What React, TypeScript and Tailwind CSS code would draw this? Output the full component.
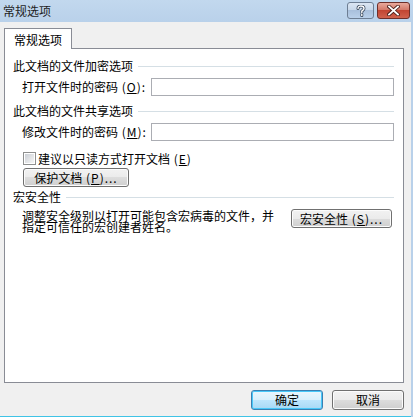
const font = { fontFamily: '"Noto Sans CJK SC", "Liberation Sans", sans-serif' };

function WinButton({ children, className = "", isDefault = false }: { children: React.ReactNode; className?: string; isDefault?: boolean }) {
	return (
		<div
			className={`flex items-center justify-center rounded-[3px] border text-[12px] leading-[12px] text-black ${
				isDefault
					? "border-[#3c7fb1] bg-[linear-gradient(#eaf6fd_0%,#d9f0fc_50%,#bee6fd_50%,#a7d9f5_100%)] shadow-[inset_0_0_0_1px_#48c8f9]"
					: "border-[#707070] bg-[linear-gradient(#f2f2f2_0%,#ebebeb_50%,#dddddd_50%,#cfcfcf_100%)] shadow-[inset_0_0_0_1px_#fcfcfc]"
			} ${className}`}
		>
			{children}
		</div>
	);
}

function GroupHeading({ text }: { text: string }) {
	return (
		<div className="flex h-[12px] items-center pr-[9px]">
			<span className="whitespace-nowrap text-[12px] leading-[12px]">{text}</span>
			<div className="ml-[5px] h-px flex-1 bg-[#d5dfe5]" />
		</div>
	);
}

function PasswordRow({ label, keyChar }: { label: string; keyChar: string }) {
	return (
		<div className="mt-[6px] flex h-[18px] items-center pl-[9px] pr-[9px]">
			<span className="w-[129px] whitespace-nowrap text-[12px] leading-[12px]">
				{label}
				<span className="tracking-[1px]">
					{" "}(<u>{keyChar}</u>):
				</span>
			</span>
			<div className="h-[18px] flex-1 border border-[#abadb3] bg-white" />
		</div>
	);
}

export default function App() {
	return (
		<div className="flex h-[417px] w-[413px] flex-col bg-[#b9d1ea] text-black" style={font}>
			<div className="flex h-[22px] shrink-0 items-start justify-between bg-[linear-gradient(#c2d8ee,#b9d1ea)] pl-[3px] pr-[3px]">
				<span className="mt-[5px] text-[12px] leading-[12px] text-[#1e1e1e]">常规选项</span>
				<div className="mt-[2px] flex gap-[3px]">
					<div className="flex h-[17px] w-[27px] items-center justify-center rounded-[3px] border border-[#6d7e93] bg-[linear-gradient(#dbe6f3_0%,#c8d8ea_45%,#a9c0dc_50%,#b9d0ea_100%)]">
						<svg width="10" height="12" viewBox="0 0 10 12">
							<path d="M2 3.5 C2 1.5 3.5 1 5 1 C6.8 1 8 2 8 3.5 C8 5 6.5 5.3 5.8 6.2 L5.8 7.6 M5.8 9.3 L5.8 10.6" fill="none" stroke="#3a4a5e" strokeWidth="3" strokeLinecap="round" />
							<path d="M2 3.5 C2 1.5 3.5 1 5 1 C6.8 1 8 2 8 3.5 C8 5 6.5 5.3 5.8 6.2 L5.8 7.6 M5.8 9.3 L5.8 10.6" fill="none" stroke="#ffffff" strokeWidth="1.4" strokeLinecap="round" />
						</svg>
					</div>
					<div className="flex h-[17px] w-[33px] items-center justify-center rounded-[3px] border border-[#6e2f2a] bg-[linear-gradient(#e9a99c_0%,#d47a6a_45%,#c24532_50%,#d0624d_100%)]">
						<svg width="13" height="11" viewBox="0 0 13 11">
							<path d="M2 1.5 L11 9.5 M11 1.5 L2 9.5" fill="none" stroke="#4a1d18" strokeWidth="3.6" strokeLinecap="square" />
							<path d="M2 1.5 L11 9.5 M11 1.5 L2 9.5" fill="none" stroke="#ffffff" strokeWidth="1.8" strokeLinecap="square" />
						</svg>
					</div>
				</div>
			</div>
			<div className="mr-[2px] flex flex-1 flex-col border-b border-[#3fc3e6] bg-[#f0f0f0] pl-[4px] pr-[7px] pt-[6px]">
				<div className="relative z-10 -mb-px flex h-[21px] w-[68px] items-center justify-center border border-b-0 border-[#898c95] bg-white pt-[1px] text-[12px] leading-[12px]">
					常规选项
				</div>
				<div className="flex h-[335px] flex-col border border-[#898c95] bg-white pl-[8px] pt-[11px]">
					<GroupHeading text="此文档的文件加密选项" />
					<PasswordRow label="打开文件时的密码" keyChar="O" />
					<div className="mt-[9px]">
						<GroupHeading text="此文档的文件共享选项" />
					</div>
					<PasswordRow label="修改文件时的密码" keyChar="M" />
					<div className="mt-[11px] flex h-[13px] items-center pl-[10px]">
						<div className="flex h-[13px] w-[13px] items-center justify-center border border-[#8e8f8f] bg-white">
							<div className="h-[9px] w-[9px] bg-[linear-gradient(135deg,#cbcfd5,#f6f6f6)]" />
						</div>
						<span className="ml-[2px] text-[12px] leading-[12px]">
							建议以只读方式打开文档<span className="tracking-[1px]"> (<u>E</u>)</span>
						</span>
					</div>
					<WinButton className="ml-[10px] mt-[3px] h-[19px] w-[106px]">
						保护文档<span className="tracking-[1px]">&nbsp;(<u>P</u>)...</span>
					</WinButton>
					<div className="mt-[4px]">
						<GroupHeading text="宏安全性" />
					</div>
					<div className="mt-[6px] flex items-start pl-[9px] pr-[11px]">
						<p className="w-[256px] pt-[1px] text-[12px] leading-[11px]">
							调整安全级别以打开可能包含宏病毒的文件，并指定可信任的宏创建者姓名。
						</p>
						<div className="flex-1" />
						<WinButton className="h-[19px] w-[101px]">
							宏安全性<span className="tracking-[1px]">&nbsp;(<u>S</u>)...</span>
						</WinButton>
					</div>
				</div>
				<div className="mt-[7px] flex justify-end gap-[9px]">
					<WinButton isDefault className="h-[20px] w-[72px]">
						确定
					</WinButton>
					<WinButton className="h-[20px] w-[72px]">取消</WinButton>
				</div>
			</div>
		</div>
	);
}
